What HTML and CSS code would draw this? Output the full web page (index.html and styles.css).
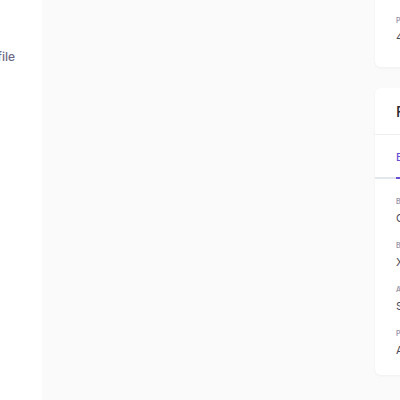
FILE: index.html
```html
<!DOCTYPE html>
<html>
<head>
<meta charset="utf-8">
<link rel="stylesheet" href="styles.css">
</head>
<body>
<div class="app">
  <aside class="sidebar">
    <nav class="nav">
      <a class="nav-item">Profile</a>
    </nav>
  </aside>
  <main class="main">
    <div class="spacer"></div>
    <div class="column">
      <section class="card card-info">
        <div class="field">
          <div class="label">PHONE</div>
          <div class="value">415 555 0132</div>
        </div>
      </section>
      <section class="card">
        <header class="card-header">Family details</header>
        <div class="tabs">
          <div class="tab active">Emergency</div>
          <div class="tab">Dependants</div>
        </div>
        <div class="card-body">
          <div class="field">
            <div class="label">BENEFICIARY</div>
            <div class="value">Clara Mendes</div>
          </div>
          <div class="field">
            <div class="label">BLOOD TYPE</div>
            <div class="value">X positive</div>
          </div>
          <div class="field">
            <div class="label">ALLERGIES</div>
            <div class="value">Shellfish</div>
          </div>
          <div class="field">
            <div class="label">PHYSICIAN</div>
            <div class="value">Alan Brooks</div>
          </div>
        </div>
      </section>
    </div>
  </main>
</div>
</body>
</html>
```
FILE: styles.css
```css
html, body {
  margin: 0;
  padding: 0;
  height: 100%;
  overflow: hidden;
}
body {
  font-family: Inter, "Noto Sans", "Liberation Sans", sans-serif;
  background: #fafafa;
}
.app {
  display: flex;
  height: 400px;
}
.sidebar {
  flex: 0 0 240px;
  margin-left: -198px;
  background: #ffffff;
}
.nav {
  display: flex;
  flex-direction: column;
  padding-top: 39px;
}
.nav-item {
  font-size: 12px;
  line-height: 16px;
  font-weight: 500;
  color: #6c6a85;
  padding: 10px 0 10px 176px;
}
.main {
  flex: 1;
  display: flex;
  background: #fafafa;
}
.spacer {
  flex: 0 0 333px;
}
.column {
  display: flex;
  flex-direction: column;
  gap: 21px;
  margin-top: -6px;
  width: 300px;
  flex: 0 0 300px;
}
.card {
  background: #ffffff;
  border-radius: 6px;
  box-shadow: 0 1px 3px rgba(30, 30, 60, 0.05);
}
.card-info {
  padding: 22px 21px 22px;
}
.card-header {
  font-size: 15px;
  line-height: 20px;
  font-weight: 500;
  color: #2a2a34;
  padding: 14px 21px 12px;
  border-bottom: 1px solid #eeeef2;
}
.tabs {
  display: flex;
  gap: 24px;
  padding: 0 21px;
  border-bottom: 2px solid #e4e6ee;
}
.tab {
  font-size: 11px;
  line-height: 16px;
  font-weight: 500;
  padding: 14px 0 12px;
  margin-bottom: -2px;
  color: #6e6b82;
  border-bottom: 2px solid transparent;
}
.tab.active {
  color: #6a4fd6;
  border-bottom-color: #6a4fd6;
}
.card-body {
  padding: 18px 21px 17px;
  display: flex;
  flex-direction: column;
  gap: 15px;
}
.field {
  display: flex;
  flex-direction: column;
  gap: 3px;
}
.label {
  font-size: 7px;
  line-height: 10px;
  letter-spacing: 0.5px;
  color: #9a98a8;
  font-weight: 600;
}
.value {
  font-size: 11px;
  line-height: 16px;
  color: #4a4a5a;
}
```
